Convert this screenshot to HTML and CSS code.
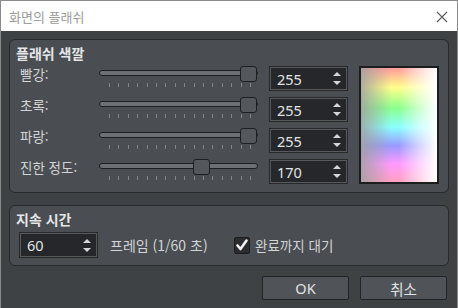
FILE: index.html
```html
<!DOCTYPE html>
<html lang="ko">
<head>
  <meta charset="UTF-8">
  <title>화면의 플래쉬</title>
  <link rel="stylesheet" href="styles.css">
</head>
<body>
  <div class="window">
    <div class="titlebar">
      <span class="title">화면의 플래쉬</span>
      <svg class="close" width="12" height="12" viewBox="0 0 12 12">
        <path d="M1 1 L11 11 M11 1 L1 11" stroke="#5a5a5a" stroke-width="1.1" fill="none"/>
      </svg>
    </div>

    <div class="dialog">
      <div class="group group-color">
        <h3>플래쉬 색깔</h3>
        <div class="color-body">
          <div class="rows">
            <div class="row">
              <span class="label">빨강:</span>
              <div class="slider"><div class="groove"></div><div class="handle" style="left: 141px"></div><div class="ticks"></div></div>
              <div class="spin"><span>255</span><span class="arrows"><i class="up"></i><i class="down"></i></span></div>
            </div>
            <div class="row">
              <span class="label">초록:</span>
              <div class="slider"><div class="groove"></div><div class="handle" style="left: 141px"></div><div class="ticks"></div></div>
              <div class="spin"><span>255</span><span class="arrows"><i class="up"></i><i class="down"></i></span></div>
            </div>
            <div class="row">
              <span class="label">파랑:</span>
              <div class="slider"><div class="groove"></div><div class="handle" style="left: 141px"></div><div class="ticks"></div></div>
              <div class="spin"><span>255</span><span class="arrows"><i class="up"></i><i class="down"></i></span></div>
            </div>
            <div class="row">
              <span class="label">진한 정도:</span>
              <div class="slider"><div class="groove"></div><div class="handle" style="left: 94px"></div><div class="ticks"></div></div>
              <div class="spin"><span>170</span><span class="arrows"><i class="up"></i><i class="down"></i></span></div>
            </div>
          </div>
          <div class="preview"></div>
        </div>
      </div>

      <div class="group group-time">
        <h3>지속 시간</h3>
        <div class="time-row">
          <div class="spin spin-time"><span>60</span><span class="arrows"><i class="up"></i><i class="down"></i></span></div>
          <span class="unit">프레임 (1/60 초)</span>
          <label class="check">
            <span class="box">
              <svg width="14" height="14" viewBox="0 0 14 14">
                <path d="M2.5 7.5 L5.5 11 L11.5 2.5" stroke="#f2f2f2" stroke-width="2.6" fill="none" stroke-linecap="round" stroke-linejoin="round"/>
              </svg>
            </span>
            완료까지 대기
          </label>
        </div>
      </div>

      <div class="buttons">
        <button class="btn">OK</button>
        <button class="btn">취소</button>
      </div>
    </div>
  </div>
</body>
</html>
```

FILE: styles.css
```css
body {
  margin: 0;
  font-family: "Noto Sans", "Noto Sans CJK KR", sans-serif;
  background-color: #3f4245;
}
.window {
  width: 458px;
  height: 308px;
  box-sizing: border-box;
  border: 1px solid #8a8a8a;
  border-bottom: none;
  background-color: #3f4245;
  display: flex;
  flex-direction: column;
}
.titlebar {
  height: 30px;
  background-color: #fff;
  display: flex;
  align-items: center;
  justify-content: space-between;
  padding: 0 9px 0 8px;
}
.title {
  font-family: "Noto Sans CJK KR", sans-serif;
  font-size: 13px;
  color: #9b9b9b;
}
.close {
  margin-top: 1px;
}
.dialog {
  padding: 8px 8px 0 8px;
  color: #d2d4d6;
}
.group {
  background-color: #4a4d51;
  border: 1px solid #27292c;
  border-radius: 6px;
  padding: 6px 9px 8px 10px;
}
.group h3 {
  margin: 0 0 7px -4px;
  font-family: "Noto Sans CJK KR", sans-serif;
  font-size: 14px;
  line-height: 14px;
  font-weight: bold;
  color: #e4e6e8;
}
.color-body {
  display: flex;
  gap: 12px;
}
.rows {
  display: flex;
  flex-direction: column;
  gap: 8px;
}
.row {
  display: flex;
  align-items: flex-start;
  height: 23px;
}
.label {
  width: 79px;
  font-family: "Noto Sans CJK KR", sans-serif;
  font-size: 13.5px;
  line-height: 14px;
}
.slider {
  position: relative;
  width: 159px;
  height: 23px;
  margin-right: 12px;
}
.groove {
  position: absolute;
  left: 0;
  right: 0;
  top: 3px;
  height: 4px;
  background-color: #6c7074;
  border: 1px solid #1d1f21;
  border-radius: 3px;
}
.handle {
  position: absolute;
  top: -1px;
  width: 15px;
  height: 14px;
  background-color: #54585c;
  border: 1px solid #1d1f21;
  border-radius: 3px;
}
.ticks {
  position: absolute;
  left: 10px;
  right: 6px;
  top: 16px;
  height: 4px;
  background: repeating-linear-gradient(to right, #80848a 0 1px, transparent 1px 9.4px);
}
.spin {
  width: 77px;
  height: 23px;
  box-sizing: border-box;
  background-color: #25272a;
  border: 1px solid #57595c;
  outline: 1px solid #26282a;
  display: flex;
  align-items: center;
  justify-content: space-between;
  padding: 0 5px 0 6px;
  font-size: 14.5px;
  color: #e2e4e6;
}
.arrows {
  display: flex;
  flex-direction: column;
  gap: 5px;
}
.arrows i {
  width: 0;
  height: 0;
  border-left: 4px solid transparent;
  border-right: 4px solid transparent;
}
.arrows .up {
  border-bottom: 4px solid #d4d6d8;
}
.arrows .down {
  border-top: 4px solid #d4d6d8;
}
.preview {
  width: 80px;
  height: 118px;
  margin-top: -1px;
  box-sizing: border-box;
  border: 2px solid #1c1d1f;
  background:
    linear-gradient(to right, rgba(160, 160, 160, 0.85), rgba(190, 190, 190, 0) 40%, rgba(255, 255, 255, 0) 50%, rgba(255, 255, 255, 0.6) 78%, #fff),
    linear-gradient(to bottom, #ff9a9a, #ffff8a 17%, #8cff8c 35%, #8affff 52%, #9a9aff 68%, #ff9aff 84%, #ffa0c0);
}
.group-time {
  margin-top: 12px;
}
.time-row {
  display: flex;
  align-items: center;
}
.spin-time {
  height: 24px;
  margin-right: 13px;
}
.unit {
  width: 124px;
  font-size: 14px;
  font-family: "Noto Sans CJK KR", sans-serif;
}
.check {
  display: flex;
  align-items: center;
  gap: 5px;
  font-family: "Noto Sans CJK KR", sans-serif;
  font-size: 13.5px;
}
.box {
  width: 16px;
  height: 17px;
  box-sizing: border-box;
  background-color: #2a2c2f;
  border: 1px solid #1b1c1e;
  border-radius: 2px;
  display: flex;
  align-items: center;
  justify-content: center;
}
.buttons {
  display: flex;
  justify-content: flex-end;
  gap: 11px;
  margin: 10px 2px 0 0;
}
.btn {
  width: 87px;
  height: 24px;
  background-color: #505458;
  border: 1px solid #222427;
  border-radius: 2px;
  color: #e0e2e4;
  font-family: "Noto Sans", "Noto Sans CJK KR", sans-serif;
  font-size: 14.5px;
  padding: 0;
}
```
